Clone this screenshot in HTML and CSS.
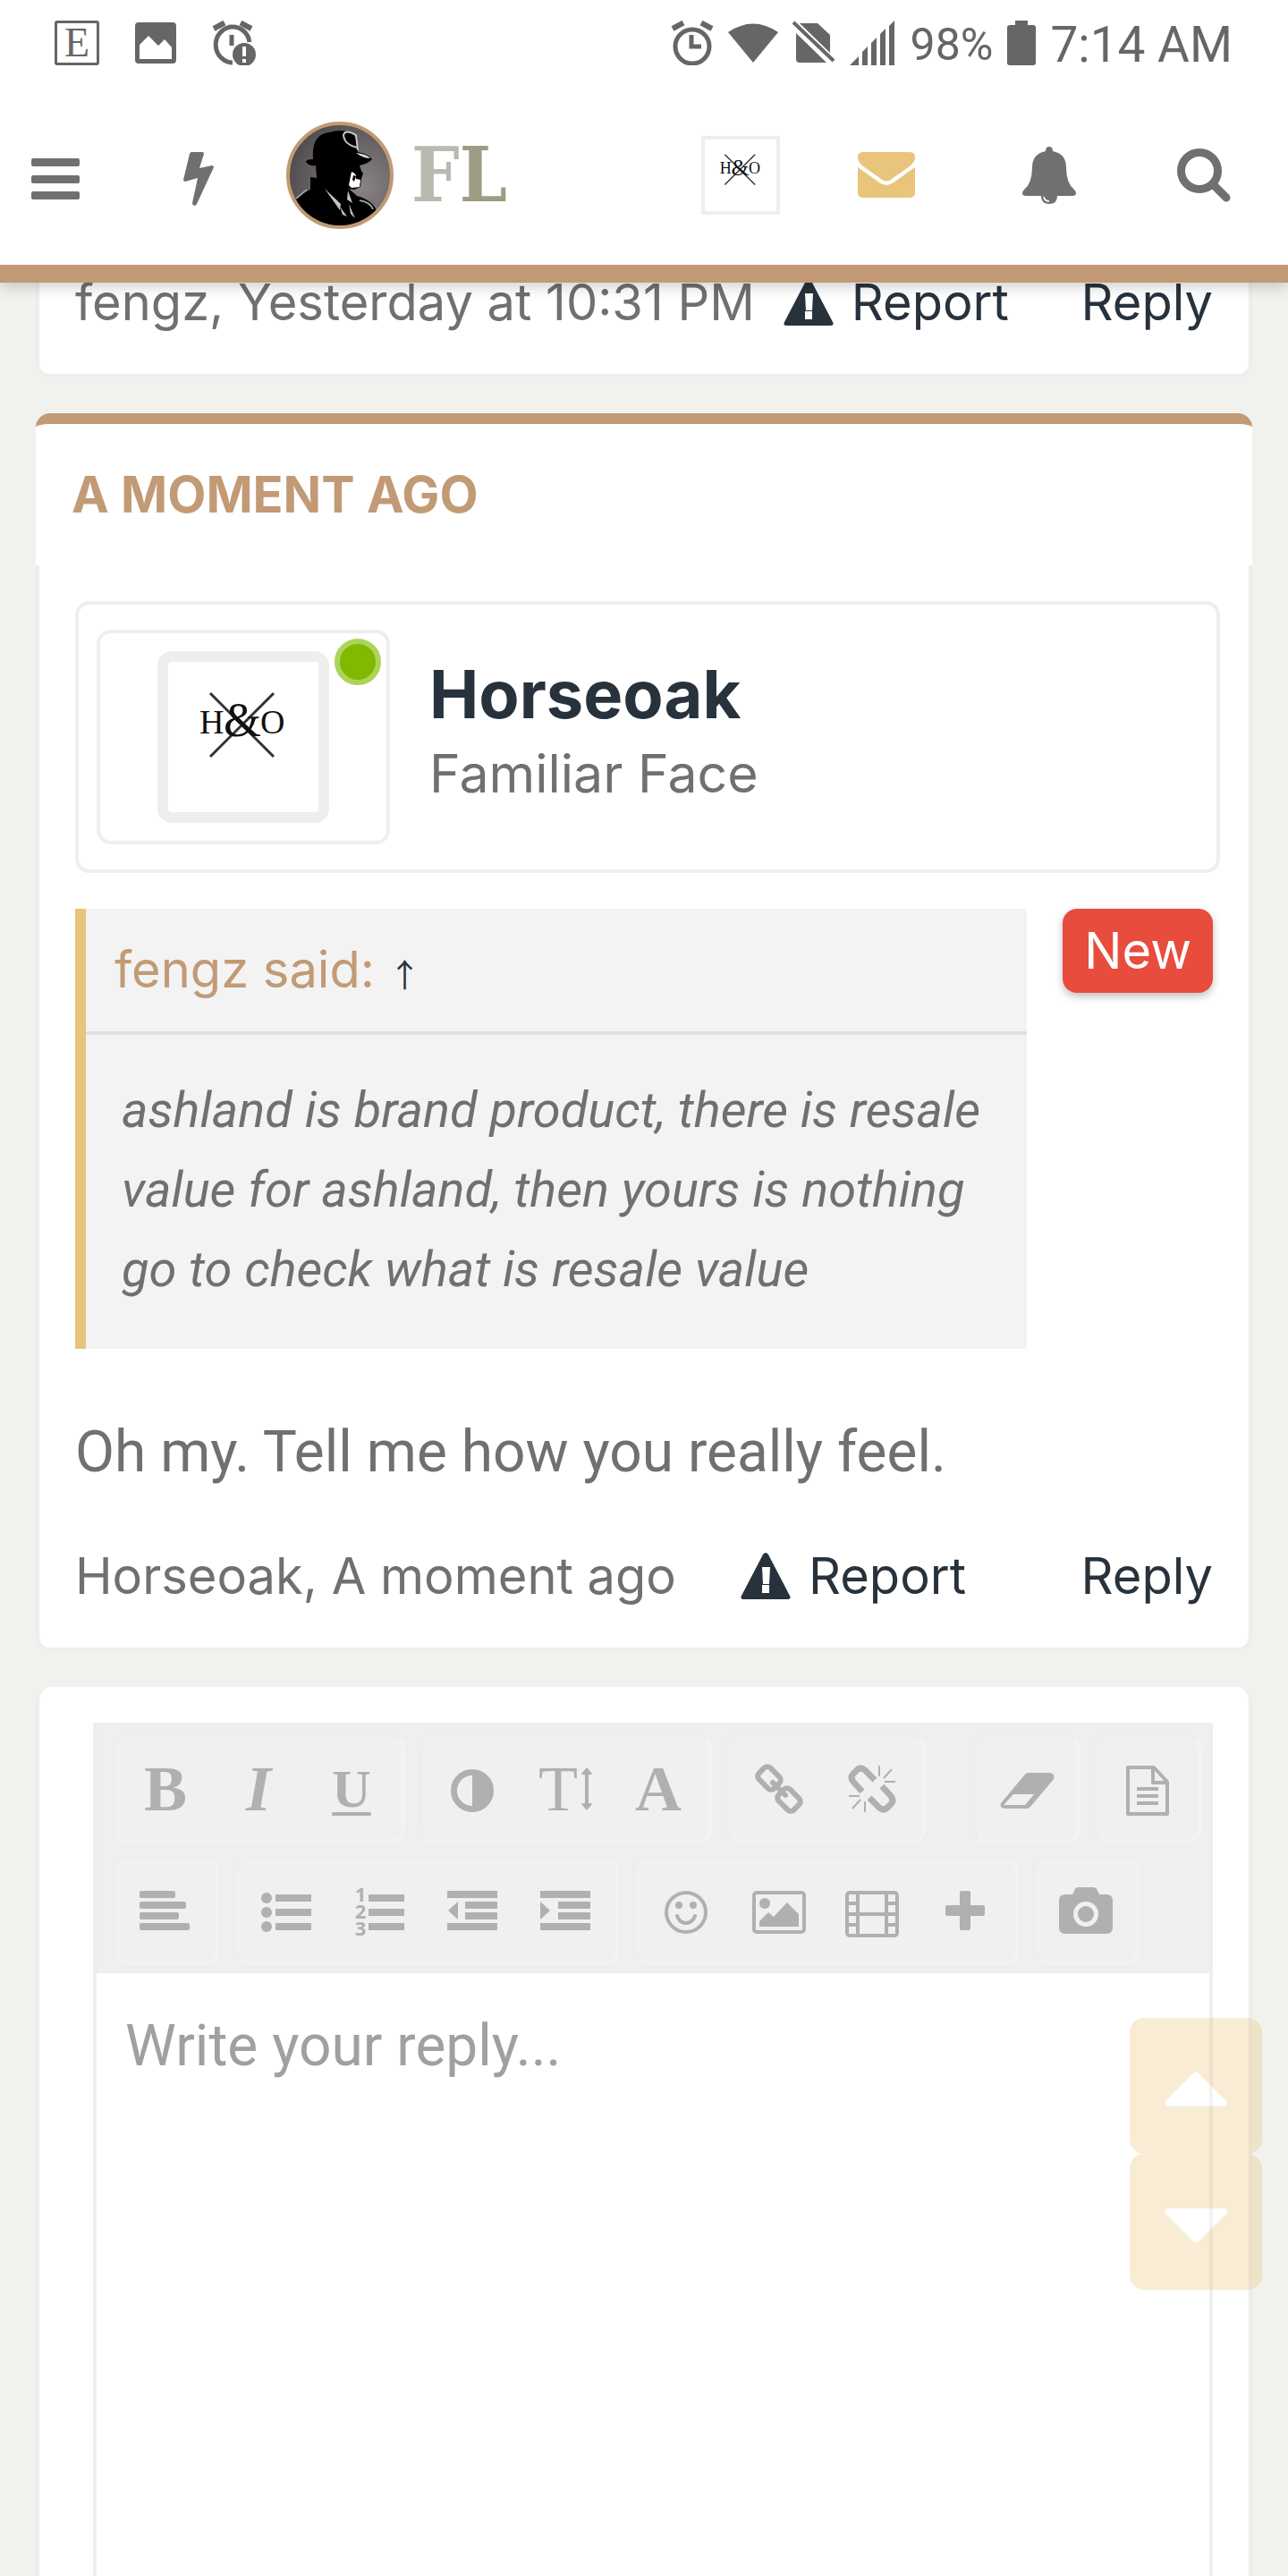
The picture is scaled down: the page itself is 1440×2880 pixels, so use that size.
FILE: index.html
```html
<!DOCTYPE html>
<html lang="en">
<head>
<meta charset="utf-8">
<meta name="viewport" content="width=device-width, initial-scale=1">
<title>FL – Thread</title>
<link rel="stylesheet" href="styles.css">
</head>
<body>
<div class="app">
  <header class="top">
    <div class="status">
      <div class="status-left">
        <span class="app-badge">E</span>
        <svg width="46" height="50" viewBox="0 0 46 50"><path fill="currentColor" fill-rule="evenodd" d="M4 2h38q4 0 4 4v38q0 4-4 4H4q-4 0-4-4V6q0-4 4-4zM5 27v16h36V30l-8-9-7 7L15 17z"/></svg>
        <svg width="50" height="50" viewBox="0 0 50 50"><g fill="none" stroke="currentColor" stroke-width="6"><path d="M2 9L14 2.500M32 2.500L44 9"/><path stroke-width="5" d="M42 24A19 20 0 1 0 23 47"/><path stroke-width="5" d="M22 16v12"/></g><circle cx="36" cy="38" r="13" fill="currentColor"/><path d="M36 29v11M36 43v4" stroke="#fff" stroke-width="4"/></svg>
      </div>
      <div class="status-right">
        <svg width="48" height="50" viewBox="0 0 48 50"><g fill="none" stroke="currentColor"><path stroke-width="6" d="M2 9L14 2.500M34 2.500L46 9"/><circle cx="24" cy="29" r="19" stroke-width="5"/><path stroke-width="5" d="M23 16v13h11"/></g></svg>
        <svg width="56" height="50" viewBox="0 0 56 50"><path fill="currentColor" d="M0 13Q28-6 56 13L28 47z"/></svg>
        <svg width="48" height="50" viewBox="0 0 48 50"><path fill="currentColor" d="M8 3h20l14 13v20zM4 14l34 33H8q-4 0-4-4z"/><path stroke="currentColor" stroke-width="4" d="M1 2l45 43"/></svg>
        <svg width="52" height="50" viewBox="0 0 52 50"><path fill="currentColor" d="M0 50l10-10v10zM14 50V35l6-6v21zM24 50V25l6-6v31zM34 50V15l6-6v41zM44 50V6l6-6v50z"/></svg>
        <span class="battery-level">98%</span>
        <svg width="32" height="50" viewBox="0 0 32 50"><path fill="currentColor" d="M9 0h14v5h6q3 0 3 3v39q0 3-3 3H3q-3 0-3-3V8q0-3 3-3h6z"/></svg>
        <span class="clock">7:14 AM</span>
      </div>
    </div>
    <nav class="nav">
      <button class="nav-btn nav-menu" aria-label="Menu"><svg width="56" height="48" viewBox="0 0 56 48"><path fill="currentColor" d="M3 1h50q2 0 2 2v5q0 2-2 2H3q-2 0-2-2V3q0-2 2-2zM3 20h50q2 0 2 2v5q0 2-2 2H3q-2 0-2-2v-5q0-2 2-2zM3 38h50q2 0 2 2v5q0 2-2 2H3q-2 0-2-2v-5q0-2 2-2z"/></svg></button>
      <button class="nav-btn nav-bolt" aria-label="What's new"><svg width="34" height="60" viewBox="0 0 34 60"><path fill="currentColor" d="M9 0h12q2 0 2 2l-5 16 14-3q2 0 2 2L15 58q-1 2-3 2-2-1-2-3l6-28-14 4q-2 0-2-2L7 2q1-2 2-2z"/></svg></button>
      <a class="logo" href="#">
        <svg width="120" height="120" viewBox="0 0 120 120" aria-hidden="true">
          <defs><radialGradient id="halo" cx=".7" cy=".6" r=".8"><stop offset="0" stop-color="#8a8485"/><stop offset="1" stop-color="#4a4647"/></radialGradient><clipPath id="disc"><circle cx="60" cy="60" r="56"/></clipPath></defs>
          <circle cx="60" cy="60" r="58" fill="url(#halo)" stroke="#c19a72" stroke-width="4"/>
          <g clip-path="url(#disc)">
            <path fill="#000" d="M34 63L33 49Q25 50 22 45Q22 42 30 42Q28 14 48 12Q60 8 72 12Q80 16 80 34Q92 36 96 42Q92 47 82 49L84 55 86 58 84 64 83 73 76 76 70 75 79 83Q97 88 101 100L90 120H20L6 90Q14 82 27 76V62z"/>
            <path fill="none" stroke="#c8c8c8" stroke-width="2" d="M80 32L78 15Q66 8 64 15Q65 26 80 29"/>
            <path fill="#d8d8d8" d="M78 35q12 1 16 6-8 0-16-6z"/>
            <path fill="#fff" d="M73 56q6 2 5 8l5 1-1 8-9 1-3-3z"/>
            <path fill="#000" d="M75 60l3 1-2 6-2-2z"/>
            <path fill="#c9bebe" d="M43 75l18 17-1 7zM69 77l5 14-6-4zM60 95l8 11-5-2zM70 92l7 16-5-5z"/>
            <path fill="none" stroke="#8fa3a3" stroke-width="2" d="M11 86l12-10M82 88q12 2 15 10"/>
          </g>
        </svg>
        <span class="logo-text">F<span class="logo-l">L</span></span>
      </a>
      <div class="nav-right">
        <a class="nav-avatar" href="#" aria-label="Your account"><svg width="80" height="80" viewBox="0 0 168 168"><use href="#ho"/></svg></a>
        <button class="nav-btn nav-mail" aria-label="Inbox"><svg width="64" height="52" viewBox="0 0 64 52"><path fill="currentColor" d="M6 0h52q6 0 6 6 0 5-6 10L38 30q-6 5-12 0L6 16Q0 11 0 6 0 0 6 0zM0 17l24 17q8 6 16 0l24-17v28q0 6-6 6H6q-6 0-6-6z"/></svg></button>
        <button class="nav-btn" aria-label="Alerts"><svg width="60" height="64" viewBox="0 0 60 64"><path fill="currentColor" d="M26 5q0-5 4-5t4 5q15 3 15 18 0 18 9 25 2 2 2 4 0 3-4 3H4q-4 0-4-3 0-2 2-4 9-7 9-25Q11 8 26 5zM21 55h18q0 9-9 9t-9-9z"/><path d="M24 56q1 5 6 5" fill="none" stroke="#fff" stroke-width="1.500"/></svg></button>
        <button class="nav-btn nav-search" aria-label="Search"><svg width="60" height="60" viewBox="0 0 60 60"><circle cx="25" cy="25" r="20.500" fill="none" stroke="currentColor" stroke-width="9"/><path d="M40 40l15 15" stroke="currentColor" stroke-width="9" stroke-linecap="round"/></svg></button>
      </div>
    </nav>
  </header>

  <svg class="defs" width="0" height="0" aria-hidden="true">
    <defs>
      <g id="ho"><path d="M47 35l71 71M118 35l-71 71" stroke="#333" stroke-width="3" fill="none"/><text x="35" y="80" class="ho-small">H</text><text x="62" y="83" class="ho-amp">&amp;</text><text x="103" y="80" class="ho-small">O</text></g>
      <g id="warn"><path fill="currentColor" fill-rule="evenodd" d="M25 2q3-4 6 0l24 46q2 4-3 4H4q-5 0-3-4zM24 16l1 19h7l1-19zM24 36v9h8v-9z"/></g>
    </defs>
  </svg>

  <main class="thread">
    <article class="card post-above">
      <footer class="meta">
        <span class="meta-by">fengz, Yesterday at 10:31 PM</span>
        <a class="report" href="#"><svg width="56" height="52" viewBox="0 0 56 52"><use href="#warn"/></svg>Report</a>
        <a class="reply" href="#">Reply</a>
      </footer>
    </article>

    <h2 class="moment">A MOMENT AGO</h2>
    <article class="card post">
      <div class="profile">
        <div class="avatar-box">
          <a class="avatar" href="#" aria-label="Horseoak"><svg width="168" height="168" viewBox="0 0 168 168"><use href="#ho"/></svg></a>
          <span class="online" title="Online now"></span>
        </div>
        <div class="who">
          <a class="name" href="#">Horseoak</a>
          <span class="rank">Familiar Face</span>
        </div>
      </div>
      <div class="message">
        <blockquote class="quote">
          <div class="quote-head">fengz said: <a href="#">↑</a></div>
          <p class="quote-body">ashland is brand product, there is resale value for ashland, then yours is nothing go to check what is resale value</p>
        </blockquote>
        <strong class="new">New</strong>
      </div>
      <p class="text">Oh my. Tell me how you really feel.</p>
      <footer class="meta">
        <span class="meta-by">Horseoak, A moment ago</span>
        <a class="report" href="#"><svg width="56" height="52" viewBox="0 0 56 52"><use href="#warn"/></svg>Report</a>
        <a class="reply" href="#">Reply</a>
      </footer>
    </article>

    <form class="card composer">
      <div class="editor">
        <div class="toolbar">
          <div class="row">
            <div class="group">
              <button type="button" class="tool t-bold" aria-label="Bold">B</button>
              <button type="button" class="tool t-italic" aria-label="Italic">I</button>
              <button type="button" class="tool t-under" aria-label="Underline">U</button>
            </div>
            <div class="group">
              <button type="button" class="tool" aria-label="Text colour"><svg width="64" height="64" viewBox="0 0 64 64"><circle cx="32" cy="34" r="20.500" fill="none" stroke="currentColor" stroke-width="7"/><path fill="currentColor" d="M32 14a20 20 0 0 1 0 40z"/></svg></button>
              <button type="button" class="tool t-size" aria-label="Font size">T<svg width="12" height="48" viewBox="0 0 12 48"><path fill="currentColor" d="M6 0l6 7q0 1-2 1H8v32h2q2 0 2 1l-6 7-6-7q0-1 2-1h2V8H2Q0 8 0 7z"/></svg></button>
              <button type="button" class="tool t-family" aria-label="Font family">A</button>
            </div>
            <div class="group">
              <button type="button" class="tool" aria-label="Insert link"><svg width="64" height="64" viewBox="0 0 64 64"><g fill="none" stroke="currentColor" stroke-width="6"><rect x="9" y="11" width="24" height="18" rx="5" transform="rotate(45 21 20)"/><rect x="31" y="35" width="24" height="18" rx="5" transform="rotate(45 43 44)"/><path d="M25 25l14 14" stroke-linecap="round"/></g></svg></button>
              <button type="button" class="tool" aria-label="Remove link"><svg width="64" height="64" viewBox="0 0 64 64"><g fill="none" stroke="currentColor"><path stroke-width="7" d="M35 22L24 11Q19 7 15 11L11 15Q7 19 11 24L21 35M43 29L53 40Q57 45 53 49L49 53Q45 57 40 53L29 42"/><path stroke-width="2" d="M40 6v12M54 10l-9 10M46 24h12M24 58V46M10 54l9-10M18 40H6"/></g></svg></button>
            </div>
            <div class="group group-end">
              <button type="button" class="tool" aria-label="Remove formatting"><svg width="64" height="64" viewBox="0 0 64 64"><path fill="currentColor" fill-rule="evenodd" d="M34 14h24q6 1 4 7L36 52q-2 2-5 2H7q-6-1-4-6L29 17q2-3 5-3zM17 38L6 50h24l10-12z"/></svg></button>
            </div>
            <div class="group">
              <button type="button" class="tool" aria-label="Drafts"><svg width="64" height="64" viewBox="0 0 64 64"><path fill="none" stroke="currentColor" stroke-width="4" stroke-linejoin="round" d="M10 8h29l15 16v36H10zM38 8v17h16"/><path stroke="currentColor" stroke-width="4" d="M20 32h24M20 40h24M20 48h24"/></svg></button>
            </div>
          </div>
          <div class="row">
            <div class="group">
              <button type="button" class="tool" aria-label="Align"><svg width="64" height="64" viewBox="0 0 64 64"><g fill="currentColor"><rect x="3" y="10" width="40" height="8" rx="2"/><rect x="3" y="22" width="52" height="8" rx="2"/><rect x="3" y="34" width="44" height="8" rx="2"/><rect x="3" y="46" width="56" height="8" rx="2"/></g></svg></button>
            </div>
            <div class="group">
              <button type="button" class="tool" aria-label="Bulleted list"><svg width="64" height="64" viewBox="0 0 64 64"><g fill="currentColor"><circle cx="10" cy="18" r="6"/><circle cx="10" cy="34" r="6"/><circle cx="10" cy="50" r="6"/><path d="M20 14h40v8H20zM20 30h40v8H20zM20 46h40v8H20z"/></g></svg></button>
              <button type="button" class="tool t-numbers" aria-label="Numbered list"><span class="digits"><span>1</span><span>2</span><span>3</span></span><svg width="40" height="64" viewBox="20 0 40 64"><path fill="currentColor" d="M20 14h40v8H20zM20 30h40v8H20zM20 46h40v8H20z"/></svg></button>
              <button type="button" class="tool" aria-label="Outdent"><svg width="64" height="64" viewBox="0 0 64 64"><path fill="currentColor" d="M4 10h56v8H4zM24 22h36v8H24zM24 34h36v8H24zM4 46h56v8H4zM16 22v20L5 32z"/></svg></button>
              <button type="button" class="tool" aria-label="Indent"><svg width="64" height="64" viewBox="0 0 64 64"><path fill="currentColor" d="M4 10h56v8H4zM24 22h36v8H24zM24 34h36v8H24zM4 46h56v8H4zM4 22v20l11-10z"/></svg></button>
            </div>
            <div class="group">
              <button type="button" class="tool" aria-label="Smilies"><svg width="64" height="64" viewBox="0 0 64 64"><circle cx="32" cy="34" r="22" fill="none" stroke="currentColor" stroke-width="4"/><circle cx="24" cy="26" r="4" fill="currentColor"/><circle cx="40" cy="26" r="4" fill="currentColor"/><path d="M22 38q3 8 10 8t10-8" fill="none" stroke="currentColor" stroke-width="4" stroke-linecap="round"/></svg></button>
              <button type="button" class="tool" aria-label="Image"><svg width="64" height="64" viewBox="0 0 64 64"><rect x="4" y="12" width="56" height="44" rx="3" fill="none" stroke="currentColor" stroke-width="4"/><circle cx="16" cy="24" r="6" fill="currentColor"/><path fill="currentColor" d="M10 50v-6l10-10 6 5 15-16 13 13v14z"/></svg></button>
              <button type="button" class="tool" aria-label="Media"><svg width="64" height="64" viewBox="0 0 64 64"><rect x="4" y="12" width="56" height="48" rx="3" fill="none" stroke="currentColor" stroke-width="4"/><path fill="none" stroke="currentColor" stroke-width="4" d="M16 12v48M48 12v48M16 36h32M4 24h12M4 36h12M4 48h12M48 24h12M48 36h12M48 48h12"/></svg></button>
              <button type="button" class="tool" aria-label="Insert"><svg width="64" height="64" viewBox="0 0 64 64"><path fill="currentColor" d="M28 10h8q2 0 2 2v14h14q2 0 2 2v8q0 2-2 2H38v14q0 2-2 2h-8q-2 0-2-2V38H12q-2 0-2-2v-8q0-2 2-2h14V12q0-2 2-2z"/></svg></button>
            </div>
            <div class="group">
              <button type="button" class="tool" aria-label="Upload a photo"><svg width="64" height="64" viewBox="0 0 64 64"><path fill="currentColor" fill-rule="evenodd" d="M24 6h16q4 0 5 4l2 4h8q7 0 7 7v30q0 7-7 7H9q-7 0-7-7V21q0-7 7-7h8l2-4q1-4 5-4zM32 22a14 14 0 1 0 0 28 14 14 0 0 0 0-28z"/><circle cx="32" cy="36" r="9" fill="currentColor"/></svg></button>
            </div>
          </div>
        </div>
        <textarea class="entry" aria-label="Reply" placeholder="Write your reply..."></textarea>
      </div>
    </form>
  </main>

  <div class="jump">
    <button class="jump-btn" aria-label="Top"><svg width="72" height="40" viewBox="0 0 72 40"><path fill="#fff" d="M33 2q3-3 6 0l31 31q2 5-3 6H5q-5-1-3-6z"/></svg></button>
    <button class="jump-btn" aria-label="Bottom"><svg width="72" height="40" viewBox="0 0 72 40"><path fill="#fff" d="M33 38q3 3 6 0L70 7q2-5-3-6H5Q0 2 2 7z"/></svg></button>
  </div>
</div>
</body>
</html>
```
FILE: styles.css
```css
* { box-sizing: border-box; }

body {
  margin: 0;
  background: #f1f2ed;
  color: #707070;
  font-family: Inter, "Open Sans", sans-serif;
  font-size: 56px;
}

h2, p, blockquote { margin: 0; }
a { color: #28323c; text-decoration: none; }
svg { display: block; flex: none; }
button { border: 0; padding: 0; background: none; color: inherit; font: inherit; }
.defs { position: absolute; }

.app {
  display: flex;
  flex-direction: column;
  height: 100vh;
  overflow: hidden;
}

/* Header */
.top {
  position: relative;
  z-index: 1;
  background: #fff;
  border-bottom: 20px solid #c29a76;
  box-shadow: 0 4px 16px rgba(0, 0, 0, .2);
}

.status {
  display: flex;
  justify-content: space-between;
  align-items: center;
  height: 96px;
  padding: 0 62px 0 61px;
  color: #666;
  font-family: Roboto, sans-serif;
}
.status-left { display: flex; gap: 40px; }
.status-right { display: flex; align-items: center; gap: 16px; }
.battery-level, .clock { padding-top: 4px; line-height: 64px; }
.battery-level { font-size: 50px; }
.clock { font-size: 55px; }
.app-badge {
  width: 50px;
  height: 50px;
  border: 3px solid #666;
  border-radius: 3px;
  font: 46px/44px "Liberation Serif", serif;
  text-align: center;
}

.nav {
  display: flex;
  align-items: center;
  height: 200px;
}
.nav-btn {
  display: flex;
  align-items: center;
  justify-content: center;
  width: 182px;
  height: 120px;
}
.nav-menu { width: 124px; padding-top: 8px; }
.nav-bolt { width: 196px; padding-top: 8px; }
.nav-mail { color: #e9c47b; }
.nav-search { width: 164px; }
.logo { display: flex; align-items: center; gap: 20px; }
.logo-text {
  color: #b9baaf;
  font: bold 84px/120px "DejaVu Serif Condensed", "DejaVu Serif", serif;
}
.logo-l { color: #9d9c84; }
.nav-right {
  display: flex;
  align-items: center;
  margin-left: auto;
  padding-right: 12px;
}
.nav-avatar {
  width: 88px;
  height: 88px;
  margin-right: 28px;
  border: 4px solid #eee;
}
.ho-small { font: 38px "Liberation Serif", serif; fill: #111; }
.ho-amp { font: 54px "Liberation Serif", serif; fill: #111; }

/* Thread */
.thread { flex: 1; padding: 0 40px; min-height: 0; }
.card {
  margin-bottom: 40px;
  padding: 40px;
  background: #fff;
  border: 4px solid #eee;
  border-top: 0;
  border-radius: 0 0 16px 16px;
}
/* The earlier post is scrolled partly under the header */
.post-above { margin-top: -18px; padding-top: 0; }

.meta {
  display: flex;
  align-items: center;
  line-height: 80px;
  white-space: nowrap;
}
.meta-by { min-width: 712px; margin-right: 32px; }
.report { display: flex; align-items: center; gap: 20px; }
.reply { margin-left: auto; }

.moment {
  margin: 0;
  padding: 0 40px;
  background: #fff;
  border-top: 12px solid #c29a76;
  border-radius: 16px 16px 0 0;
  color: #c29a76;
  font-size: 56px;
  line-height: 158px;
}

.profile {
  display: flex;
  margin-right: -8px;
  padding: 28px 20px;
  border: 4px solid #eee;
  border-radius: 16px;
}
.avatar-box {
  position: relative;
  display: flex;
  justify-content: center;
  width: 328px;
  height: 240px;
  padding-top: 20px;
  border: 4px solid #eee;
  border-radius: 16px;
}
.avatar {
  width: 192px;
  height: 192px;
  border: 12px solid #eee;
  border-radius: 16px;
}
.online {
  position: absolute;
  top: 6px;
  right: 6px;
  width: 52px;
  height: 52px;
  background: #80b900;
  border: 6px solid #acd45a;
  border-radius: 50%;
}
.who {
  display: flex;
  flex-direction: column;
  padding: 24px 0 0 44px;
}
.name { font-size: 74px; font-weight: 700; line-height: 96px; }
.rank { font-size: 59px; line-height: 82px; }

.message {
  display: flex;
  align-items: flex-start;
  gap: 40px;
  margin-top: 40px;
}
.quote {
  flex: 1;
  background: #f3f3f3;
  border-left: 12px solid #e9c47b;
}
.quote-head {
  padding: 0 32px;
  border-bottom: 4px solid #e0e0e0;
  color: #c29a76;
  line-height: 137px;
}
.quote-head a { font: 36px/40px "Noto Sans CJK JP", sans-serif; }
.quote-body {
  padding: 40px 40px 44px;
  font-family: Roboto, sans-serif;
  font-style: italic;
  line-height: 89px;
}
.new {
  padding: 0 24px;
  background: #e84c3d;
  border-radius: 16px;
  box-shadow: 0 4px 10px rgba(0, 0, 0, .25);
  color: #fff;
  font-weight: 400;
  line-height: 94px;
}
.text {
  margin: 68px 0 50px;
  font: 64px/96px Roboto, sans-serif;
}

/* Reply editor */
.composer {
  margin-bottom: 0;
  padding-left: 60px;
  border-radius: 16px;
}
.editor { border: 4px solid #eee; }
.toolbar {
  display: flex;
  flex-direction: column;
  gap: 14px;
  padding: 9px 4px 9px 17px;
  background: #efefef;
}
.row { display: flex; gap: 15px; }
.group {
  display: flex;
  padding: 4px;
  background: #f0f0f0;
  border: 4px solid #eee;
  border-right-color: #f3f3f3;
  border-bottom-color: #f3f3f3;
  border-radius: 16px;
}
.group-end { margin-left: 38px; }
.tool {
  display: flex;
  align-items: center;
  justify-content: center;
  width: 104px;
  height: 106px;
  color: #b0b0b0;
  font: bold 72px/106px "Liberation Serif", serif;
}
.t-italic { font-style: italic; }
.t-under { font-size: 60px; text-decoration: underline; text-decoration-thickness: 4px; text-underline-offset: 6px; }
.t-size { gap: 4px; font-weight: 400; }
.t-numbers { gap: 2px; }
.digits {
  display: flex;
  flex-direction: column;
  width: 14px;
  font: bold 22px/19px "Noto Sans", sans-serif;
}
.entry {
  display: block;
  width: 100%;
  height: 760px;
  padding: 48px 32px;
  border: 0;
  outline: 0;
  resize: none;
  background: #fff;
  color: #6e6e6e;
  font: 64px/68px Roboto, sans-serif;
}
.entry::placeholder { color: #a0a0a0; opacity: 1; }

/* Jump buttons float over the thread */
.jump {
  position: fixed;
  right: 29px;
  bottom: 320px;
  z-index: 2;
  display: flex;
  flex-direction: column;
  opacity: .32;
}
.jump-btn {
  display: flex;
  align-items: center;
  justify-content: center;
  width: 148px;
  height: 152px;
  padding-top: 8px;
  background: #e9c47b;
  border-radius: 16px;
}
```
